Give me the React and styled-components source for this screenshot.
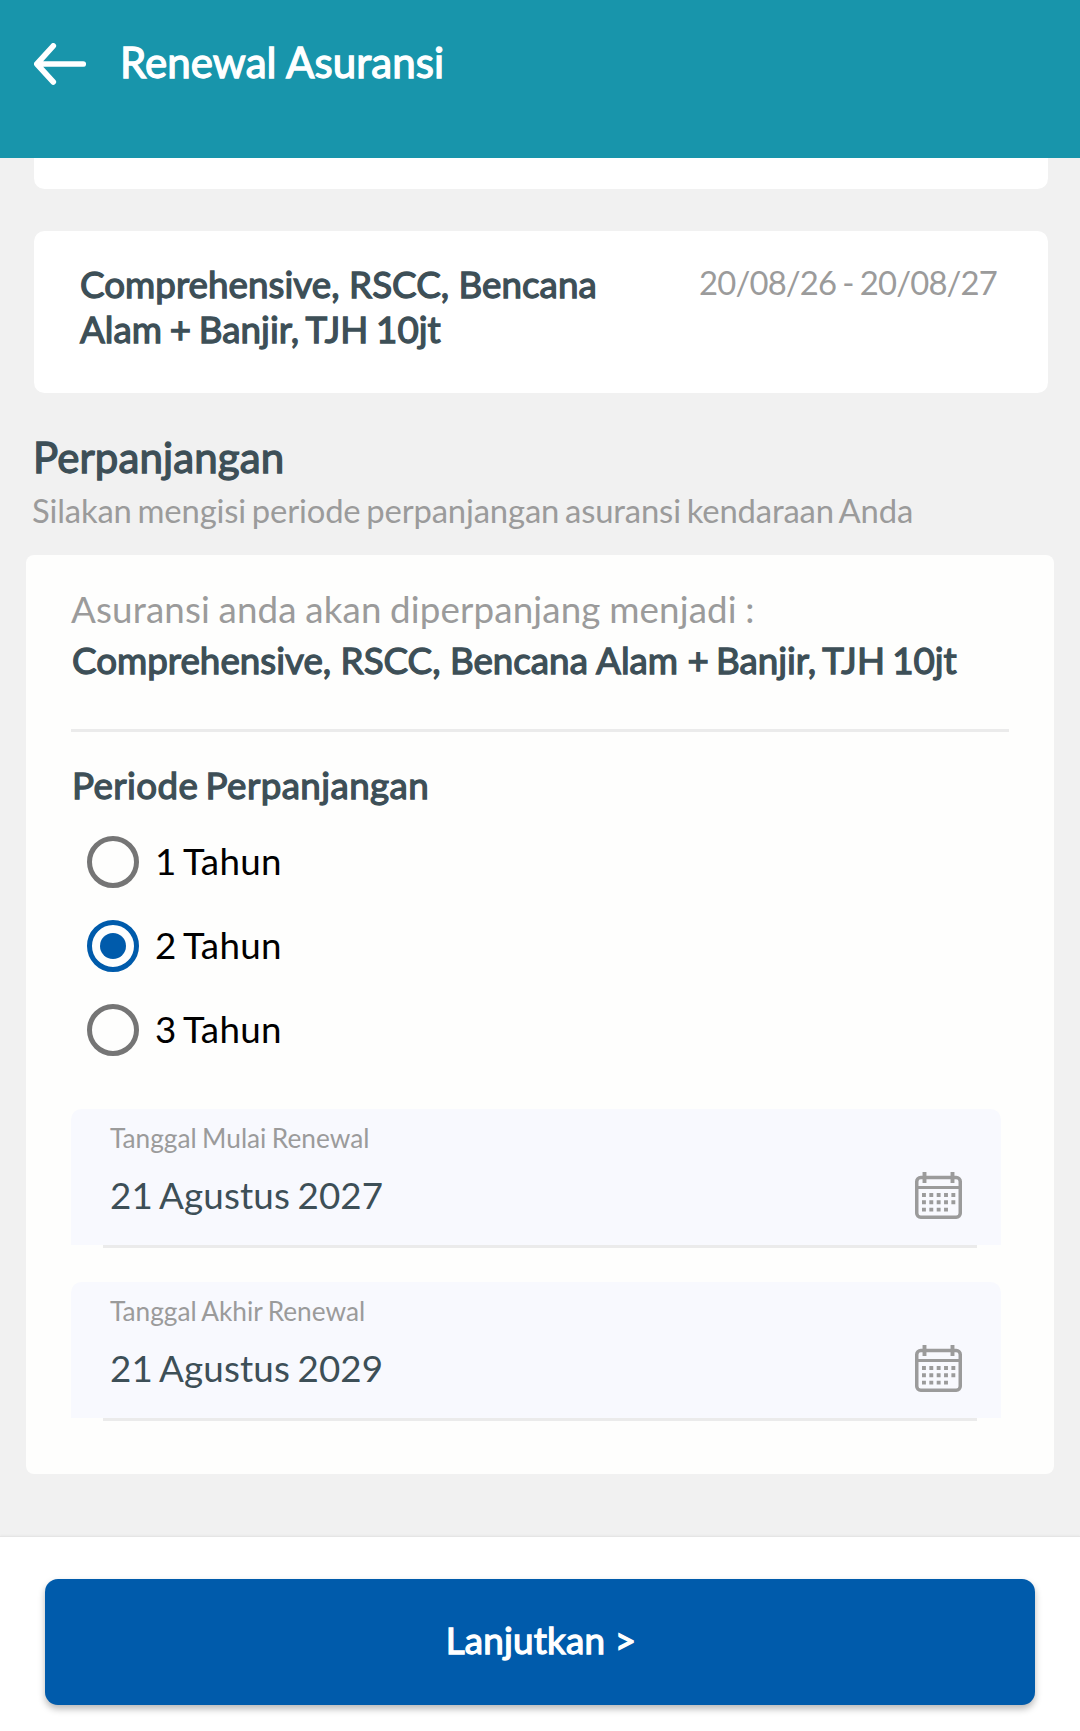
import React, { useState } from "react";
import styled, { createGlobalStyle, css } from "styled-components";

const GlobalStyle = createGlobalStyle`
  * { box-sizing: border-box; }
  body { margin: 0; background: #f1f1f1; }
`;

const heavy = css`
  font-weight: 400;
  -webkit-text-stroke: 1.3px currentColor;
`;

const Screen = styled.div`
  width: 1080px;
  height: 1731px;
  display: flex;
  flex-direction: column;
  overflow: hidden;
  background: #f1f1f1;
  color: #3d4f57;
  font-family: Lato, "Open Sans", sans-serif;
`;

const Header = styled.header`
  flex: none;
  height: 158px;
  padding: 37px 34px 0;
  display: flex;
  align-items: flex-start;
  gap: 34px;
  background: #1895ab;
  color: #fff;
`;

const BackButton = styled.button`
  border: 0;
  padding: 6px 0 0;
  background: none;
  color: inherit;
  svg { display: block; }
`;

const Title = styled.h1`
  ${heavy}
  margin: 0;
  font-size: 42px;
  line-height: 50px;
  letter-spacing: 0.08px;
`;

const Content = styled.main`
  flex: 1;
  min-height: 0;
`;

const Card = styled.section`
  margin: 0 32px 0 34px;
  border-radius: 10.5px;
  background: #fff;
`;

const ClippedCard = styled(Card)`
  height: 31px;
  border-top-left-radius: 0;
  border-top-right-radius: 0;
`;

const PolicyCard = styled(Card)`
  height: 162px;
  margin-top: 42px;
  padding: 31px 51px 0 46px;
  display: flex;
  justify-content: space-between;
`;

const PolicyName = styled.div`
  ${heavy}
  font-size: 36.75px;
  line-height: 45px;
  letter-spacing: 0.03px;
`;

const PolicyLine = styled.div`
  word-spacing: ${(p) => (p.$tight ? "-1.8px" : "0")};
  white-space: nowrap;
`;

const Tight = styled.span`
  word-spacing: -2.2px;
`;

const PolicyDates = styled.div`
  padding-top: 1.5px;
  font-size: 32.8px;
  line-height: 38px;
  letter-spacing: -0.82px;
  word-spacing: -1.5px;
  color: #9b9b9b;
  white-space: nowrap;
`;

const SectionTitle = styled.h2`
  ${heavy}
  margin: 39px 0 0 33px;
  font-size: 42px;
  line-height: 50px;
  letter-spacing: 0.1px;
`;

const SectionHint = styled.p`
  margin: 10px 0 0 32px;
  font-size: 32.8px;
  line-height: 38px;
  letter-spacing: -0.16px;
  word-spacing: -2.4px;
  color: #9b9b9b;
  white-space: nowrap;
`;

const FormCard = styled.section`
  height: 919px;
  margin: 25px 26px 0;
  padding: 31px 45px 0;
  border-radius: 8px;
  background: #fefefd;
`;

const Lead = styled.p`
  margin: 0;
  font-size: 36.75px;
  line-height: 46px;
  letter-spacing: 0.14px;
  word-spacing: -1px;
  color: #9b9b9b;
`;

const Product = styled.p`
  ${heavy}
  margin: 5px 0 0 1px;
  font-size: 36.75px;
  line-height: 46px;
  white-space: nowrap;
`;

const Divider = styled.hr`
  height: 3px;
  margin: 46px 0 31px;
  border: 0;
  background: #ebebeb;
`;

const GroupTitle = styled.h3`
  ${heavy}
  margin: 0 0 0 1px;
  font-size: 36.75px;
  line-height: 44px;
  letter-spacing: 0.4px;
  word-spacing: -2.5px;
`;

const RadioList = styled.div`
  display: flex;
  flex-direction: column;
  gap: 31.5px;
  margin: 28.5px 0 53px 15.5px;
`;

const RadioRow = styled.label`
  display: flex;
  align-items: center;
  gap: 16px;
  height: 52.5px;
  font-size: 36.75px;
  color: #000;
`;

const RadioText = styled.span`
  padding-bottom: 2px;
  letter-spacing: 0.3px;
  word-spacing: -2.2px;
`;

const RadioInput = styled.input`
  appearance: none;
  width: 52.5px;
  height: 52.5px;
  margin: 0;
  display: grid;
  place-items: center;
  border: 5.25px solid #757575;
  border-radius: 50%;
  &:checked { border-color: #005bab; }
  &:checked::before {
    content: "";
    width: 26.4px;
    height: 26.4px;
    border-radius: 50%;
    background: #005bab;
  }
`;

const Field = styled.div`
  width: 930px;
  margin-bottom: 34px;
`;

const FieldBody = styled.div`
  height: 136px;
  padding: 13px 39px 0 39px;
  display: flex;
  justify-content: space-between;
  border-radius: 10.5px 10.5px 0 0;
  background: #f8f9fe;
  svg { display: block; margin-top: 50px; }
`;

const FieldLine = styled.div`
  height: 3px;
  margin: 0 24px 0 32px;
  background: #ebebeb;
`;

const FieldLabel = styled.div`
  font-size: 26.25px;
  line-height: 32px;
  word-spacing: -1.3px;
  color: #9b9b9b;
`;

const FieldValue = styled.div`
  margin-top: 19px;
  font-size: 36.75px;
  line-height: 44px;
  letter-spacing: 0.15px;
  word-spacing: -2.2px;
`;

const Footer = styled.footer`
  flex: none;
  height: 195px;
  padding: 42px 45px 0;
  border-top: 1px solid #e5e5e5;
  background: #fff;
  box-shadow: 0 -1px 2px rgba(0, 0, 0, 0.03);
`;

const PrimaryButton = styled.button`
  ${heavy}
  display: block;
  width: 100%;
  height: 126px;
  padding: 0 0 5px 2px;
  border: 0;
  border-radius: 13px;
  background: #005bab;
  color: #fff;
  box-shadow: 0 4px 7px rgba(0, 0, 0, 0.28);
  font-family: inherit;
  font-size: 36.75px;
  letter-spacing: 0.2px;
`;

const BackIcon = () => (
  <svg width="52" height="42" viewBox="0 0 52 42" fill="none" stroke="currentColor" strokeWidth="5.6" strokeLinecap="round" strokeLinejoin="round">
    <path d="M49.3 21H3M19.3 2.9L2.8 21l16.5 18" />
  </svg>
);

const CalendarIcon = () => (
  <svg width="47" height="47" viewBox="0 0 47 47" fill="none" stroke="#9b9b9b">
    <rect x="1.75" y="5.5" width="43.5" height="39.7" rx="4" strokeWidth="3.5" />
    <path d="M2 15.5h43" strokeWidth="3.2" />
    <path d="M9.5 0v11M37.5 0v11" strokeWidth="3.9" />
    <path d="M7 23h33.4M7 30.2h33.4M7 37.6h26.1" strokeWidth="3.9" strokeDasharray="3.9 3.45" />
  </svg>
);

const DateField = ({ label, value }) => (
  <Field>
    <FieldBody>
      <div>
        <FieldLabel>{label}</FieldLabel>
        <FieldValue>{value}</FieldValue>
      </div>
      <CalendarIcon />
    </FieldBody>
    <FieldLine />
  </Field>
);

export default function App() {
  const [period, setPeriod] = useState(2);
  return (
    <Screen>
      <GlobalStyle />
      <Header>
        <BackButton aria-label="Kembali"><BackIcon /></BackButton>
        <Title>Renewal Asuransi</Title>
      </Header>
      <Content>
        <ClippedCard />
        <PolicyCard>
          <PolicyName>
            <PolicyLine>Comprehensive, RSCC, Bencana</PolicyLine>
            <PolicyLine $tight>Alam + Banjir, TJH 10jt</PolicyLine>
          </PolicyName>
          <PolicyDates>20/08/26 - 20/08/27</PolicyDates>
        </PolicyCard>
        <SectionTitle>Perpanjangan</SectionTitle>
        <SectionHint>Silakan mengisi periode perpanjangan asuransi kendaraan Anda</SectionHint>
        <FormCard>
          <Lead>Asuransi anda akan diperpanjang menjadi :</Lead>
          <Product>Comprehensive, RSCC, Bencana Alam <Tight>+ Banjir, TJH 10jt</Tight></Product>
          <Divider />
          <GroupTitle>Periode Perpanjangan</GroupTitle>
          <RadioList>
            {[1, 2, 3].map((n) => (
              <RadioRow key={n}>
                <RadioInput type="radio" name="period" checked={period === n} onChange={() => setPeriod(n)} />
                <RadioText>{n} Tahun</RadioText>
              </RadioRow>
            ))}
          </RadioList>
          <DateField label="Tanggal Mulai Renewal" value="21 Agustus 2027" />
          <DateField label="Tanggal Akhir Renewal" value="21 Agustus 2029" />
        </FormCard>
      </Content>
      <Footer>
        <PrimaryButton>Lanjutkan &gt;</PrimaryButton>
      </Footer>
    </Screen>
  );
}
